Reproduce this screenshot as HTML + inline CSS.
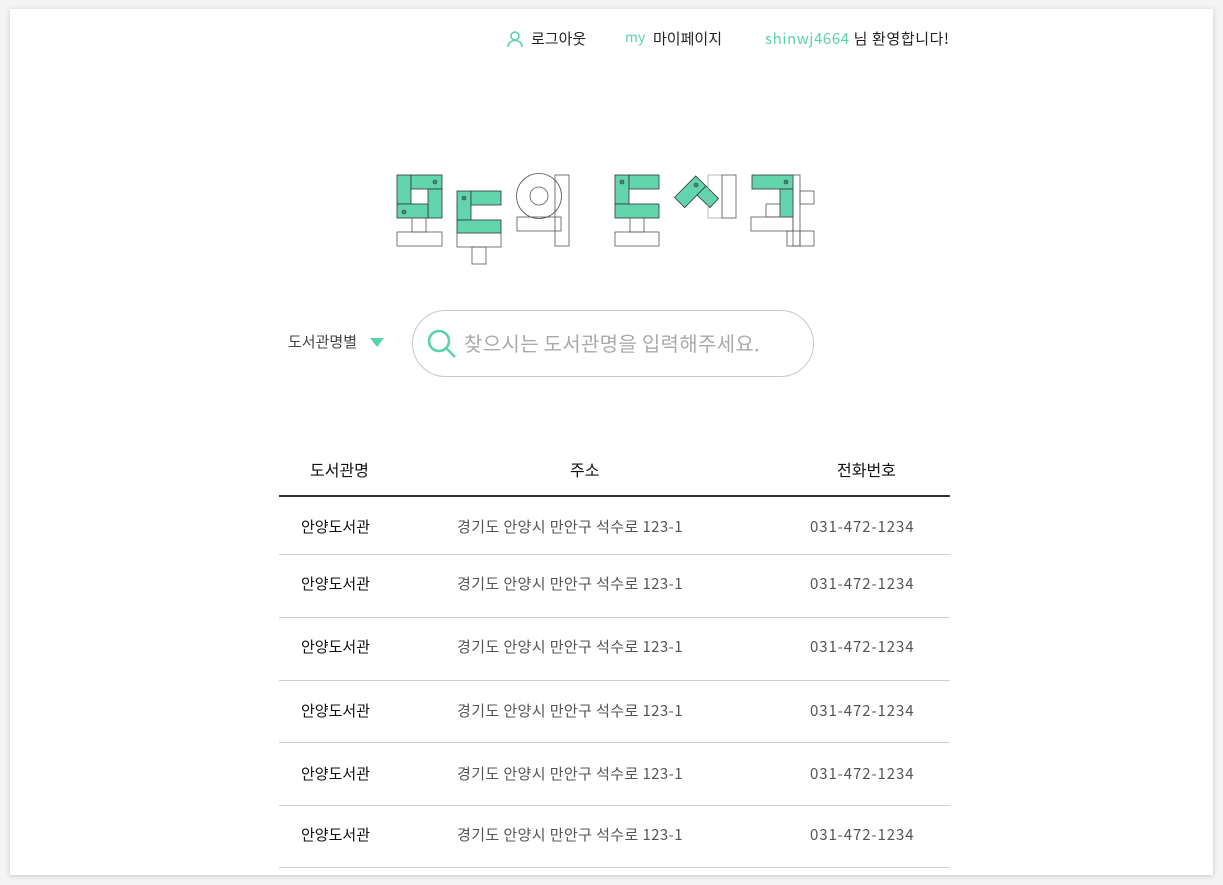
<!DOCTYPE html>
<html><head><meta charset="utf-8"><style>
body{margin:0;width:1223px;height:885px;background:#f4f4f4;font-family:"Noto Sans CJK KR","Liberation Sans",sans-serif;position:relative;overflow:hidden}
.card{position:absolute;left:10px;top:9px;width:1203px;height:866px;background:#fff;box-shadow:0 1px 5px rgba(0,0,0,.18)}
.abs{position:absolute;white-space:nowrap;line-height:20px}
.g{color:#5ad3a6}
.row{position:absolute;left:279px;width:671px;border-bottom:1px solid #cfcfcf;height:0}
.t{position:absolute;font-size:15px;white-space:nowrap;line-height:20px}
.a{letter-spacing:0.4px}
.p{letter-spacing:0.9px}
</style></head><body>
<div class="card"></div>
<svg class="abs" style="left:506px;top:30px" width="18" height="18" viewBox="0 0 18 18"><circle cx="9" cy="6" r="4" fill="none" stroke="#5ad3a6" stroke-width="1.6"/><path d="M2 17c0-4 3-6.5 7-6.5s7 2.5 7 6.5" fill="none" stroke="#5ad3a6" stroke-width="1.6"/></svg>
<div class="abs" style="left:531px;top:29px;font-size:15px;color:#222">로그아웃</div>
<div class="abs g" style="left:625px;top:27px;font-size:14px">my</div>
<div class="abs" style="left:653px;top:29px;font-size:15px;color:#222">마이페이지</div>
<div class="abs" style="left:765px;top:29px;font-size:15px;color:#222;letter-spacing:0.6px"><span class="g">shinwj4664</span> 님 환영합니다!</div>

<svg class="abs" style="left:0;top:0" width="1223" height="300">
<g stroke="#333" stroke-width="0.8" fill="#62d5ad">
<rect x="397" y="175" width="14" height="29"/><rect x="411" y="175" width="31" height="14"/><rect x="428" y="189" width="14" height="29"/><rect x="397" y="204" width="31" height="14"/>
<rect x="457" y="191" width="14" height="29"/><rect x="471" y="191" width="30" height="14"/><rect x="457" y="220" width="44" height="13"/>
<rect x="615" y="175" width="14" height="29"/><rect x="629" y="175" width="30" height="14"/><rect x="615" y="204" width="44" height="14"/>
<polygon points="674.5,197.5 695.7,176 706,186 684.7,207.5"/><polygon points="706,186 718.5,198.5 710,207.5 697,195"/>
<rect x="752" y="175" width="41" height="14"/><rect x="780" y="189" width="13" height="28"/>
</g>
<g stroke="#555" stroke-width="0.8" fill="none">
<rect x="412" y="218" width="14" height="14"/><rect x="397" y="232" width="45" height="14"/>
<rect x="457" y="233" width="44" height="14"/><rect x="472" y="247" width="14" height="17"/>
<circle cx="539" cy="196" r="22.5"/><circle cx="539" cy="196" r="9"/><rect x="517" y="217" width="44" height="14"/><rect x="555" y="175" width="14" height="71"/>
<rect x="630" y="218" width="14" height="14"/><rect x="615" y="232" width="44" height="14"/>
<rect x="708" y="175" width="14" height="43" stroke="#aaa"/><rect x="722" y="175" width="14" height="43"/>
<rect x="793" y="175" width="7" height="71"/><rect x="800" y="191" width="14" height="13"/><rect x="766" y="204" width="14" height="13"/><rect x="751" y="217" width="42" height="14"/><rect x="787" y="231" width="13" height="15"/><rect x="800" y="231" width="14" height="15"/>
</g>
<g fill="#4a8a78" stroke="#333" stroke-width="0.6">
<circle cx="435" cy="182" r="2"/><circle cx="404" cy="212" r="2"/><circle cx="464" cy="198" r="2"/><circle cx="622" cy="182" r="2"/><circle cx="696" cy="185" r="2"/><circle cx="786" cy="182" r="2"/>
</g>
</svg>

<div class="abs" style="left:288px;top:332px;font-size:15px;color:#444">도서관명별</div>
<svg class="abs" style="left:370px;top:338px" width="14" height="10"><polygon points="0,0 14,0 7,9" fill="#5ad3a6"/></svg>
<div class="abs" style="left:412px;top:310px;width:400px;height:65px;border:1px solid #c8c8c8;border-radius:34px"></div>
<svg class="abs" style="left:426px;top:328px" width="32" height="32"><circle cx="13" cy="13" r="10" fill="none" stroke="#5ad3a6" stroke-width="2.6"/><path d="M20 20l9 9" stroke="#5ad3a6" stroke-width="2.6"/></svg>
<div class="abs" style="left:464px;top:329px;font-size:20px;line-height:28px;color:#aaa;letter-spacing:0.3px">찾으시는 도서관명을 입력해주세요.</div>

<div class="t" style="left:310px;top:459px;font-size:16px;color:#111">도서관명</div>
<div class="t" style="left:570px;top:459px;font-size:16px;color:#111">주소</div>
<div class="t" style="left:837px;top:459px;font-size:16px;color:#111">전화번호</div>
<div class="row" style="top:495px;border-bottom:2px solid #333"></div>

<div class="row" style="top:554px"></div><div class="row" style="top:617px"></div><div class="row" style="top:680px"></div><div class="row" style="top:742px"></div><div class="row" style="top:805px"></div><div class="row" style="top:867px"></div>

<div class="t" style="left:301px;top:517px;color:#111">안양도서관</div><div class="t a" style="left:457px;top:517px;color:#555">경기도 안양시 만안구 석수로 123-1</div><div class="t p" style="left:810px;top:517px;color:#555">031-472-1234</div>
<div class="t" style="left:301px;top:574px;color:#111">안양도서관</div><div class="t a" style="left:457px;top:574px;color:#555">경기도 안양시 만안구 석수로 123-1</div><div class="t p" style="left:810px;top:574px;color:#555">031-472-1234</div>
<div class="t" style="left:301px;top:637px;color:#111">안양도서관</div><div class="t a" style="left:457px;top:637px;color:#555">경기도 안양시 만안구 석수로 123-1</div><div class="t p" style="left:810px;top:637px;color:#555">031-472-1234</div>
<div class="t" style="left:301px;top:701px;color:#111">안양도서관</div><div class="t a" style="left:457px;top:701px;color:#555">경기도 안양시 만안구 석수로 123-1</div><div class="t p" style="left:810px;top:701px;color:#555">031-472-1234</div>
<div class="t" style="left:301px;top:764px;color:#111">안양도서관</div><div class="t a" style="left:457px;top:764px;color:#555">경기도 안양시 만안구 석수로 123-1</div><div class="t p" style="left:810px;top:764px;color:#555">031-472-1234</div>
<div class="t" style="left:301px;top:825px;color:#111">안양도서관</div><div class="t a" style="left:457px;top:825px;color:#555">경기도 안양시 만안구 석수로 123-1</div><div class="t p" style="left:810px;top:825px;color:#555">031-472-1234</div>
</body></html>
